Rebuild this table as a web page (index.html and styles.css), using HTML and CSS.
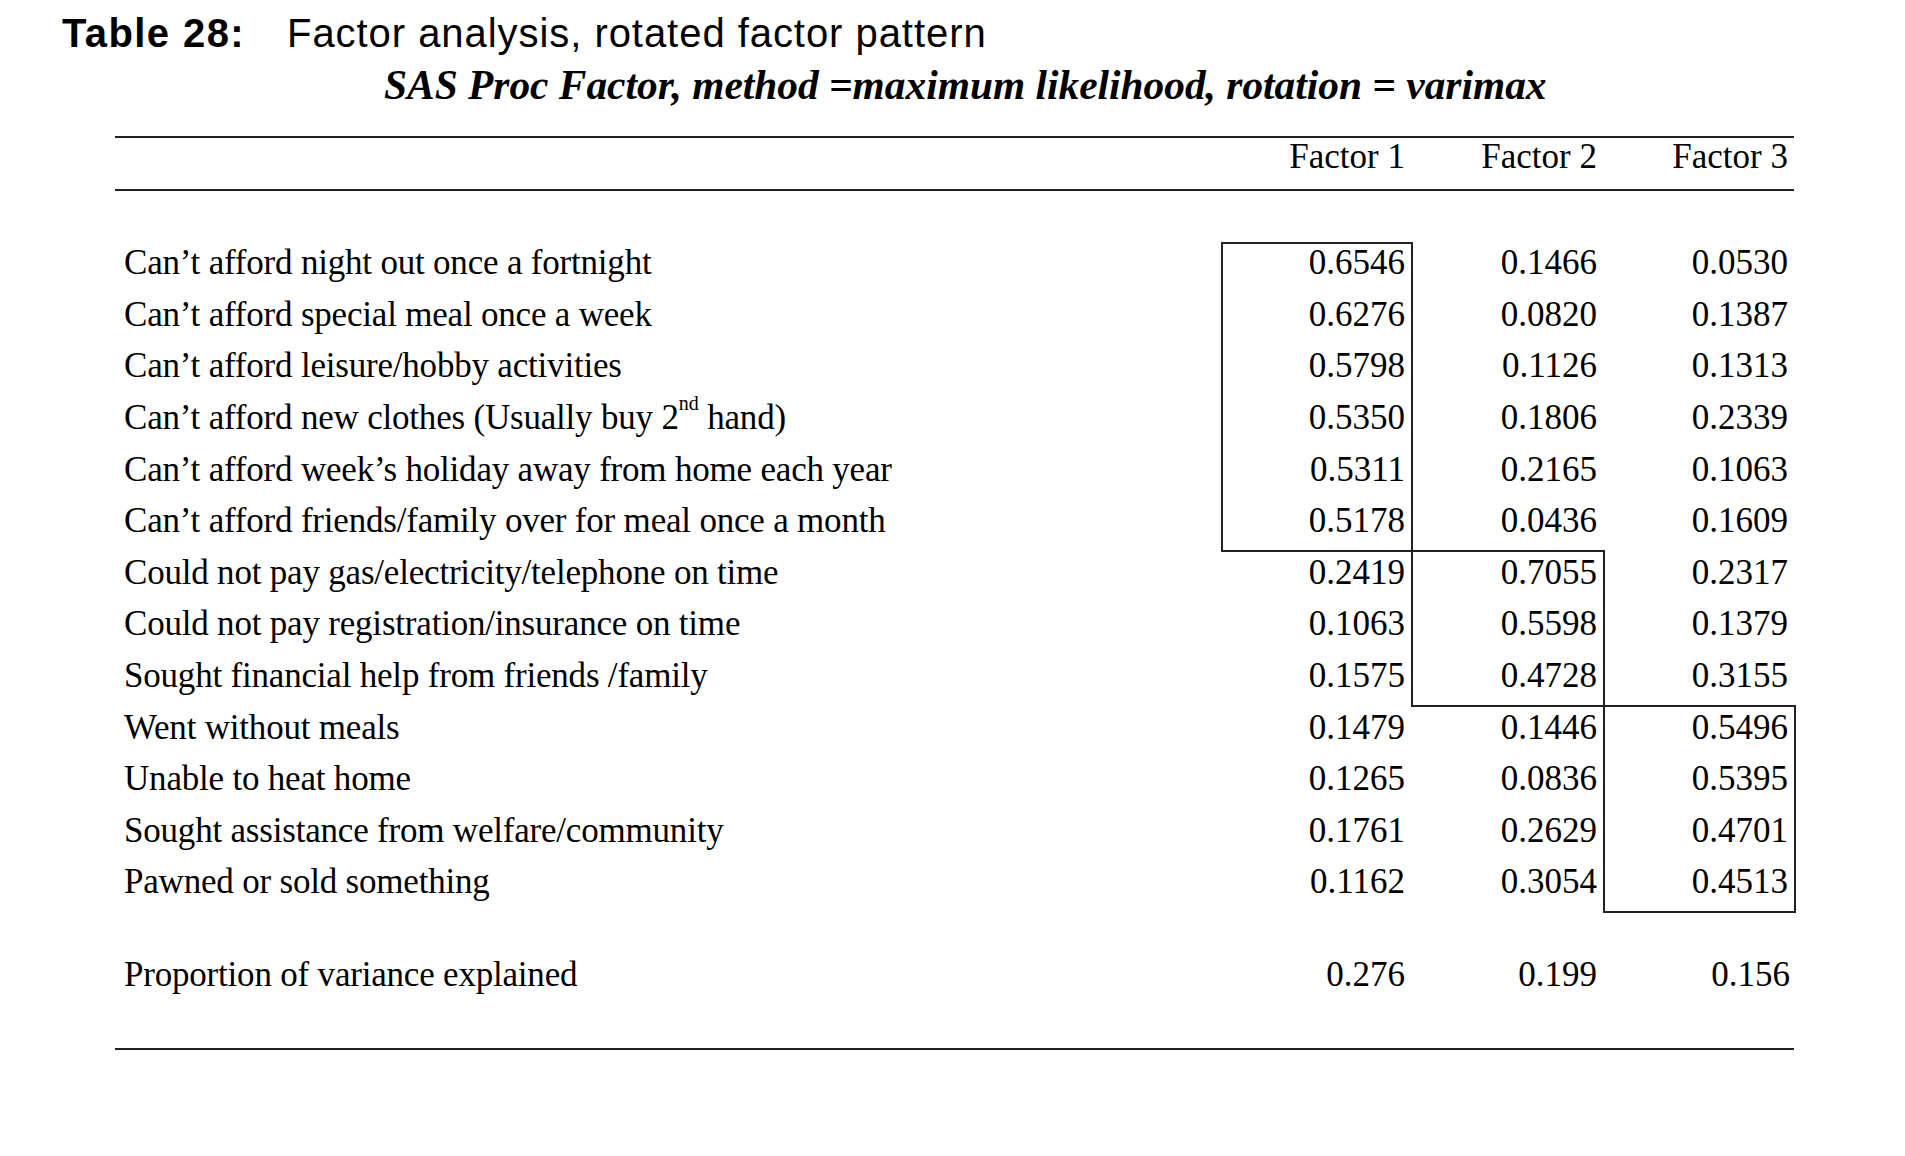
FILE: index.html
```html
<!DOCTYPE html>
<html lang="en">
<head>
<meta charset="utf-8">
<title>Table 28: Factor analysis, rotated factor pattern</title>
<link rel="stylesheet" href="styles.css">
</head>
<body>
<div class="page">
  <div class="title">
    <span class="tnum">Table 28:</span>
    <span class="ttext">Factor analysis, rotated factor pattern</span>
  </div>
  <div class="subtitle">SAS Proc Factor, method =maximum likelihood, rotation = varimax</div>

  <div class="wrap">
    <div class="head">
      <div></div>
      <div class="hcell">Factor 1</div>
      <div class="hcell">Factor 2</div>
      <div class="hcell h3">Factor 3</div>
    </div>

    <table class="data">
      <colgroup>
        <col class="c-label"><col class="c-num"><col class="c-num"><col class="c-num3">
      </colgroup>
      <tbody>
        <tr><td class="label">Can’t afford night out once a fortnight</td><td class="num bl br bt">0.6546</td><td class="num">0.1466</td><td class="num">0.0530</td></tr>
        <tr><td class="label">Can’t afford special meal once a week</td><td class="num bl br">0.6276</td><td class="num">0.0820</td><td class="num">0.1387</td></tr>
        <tr><td class="label">Can’t afford leisure/hobby activities</td><td class="num bl br">0.5798</td><td class="num">0.1126</td><td class="num">0.1313</td></tr>
        <tr><td class="label">Can’t afford new clothes (Usually buy 2<sup class="sup">nd</sup> hand)</td><td class="num bl br">0.5350</td><td class="num">0.1806</td><td class="num">0.2339</td></tr>
        <tr><td class="label">Can’t afford week’s holiday away from home each year</td><td class="num bl br">0.5311</td><td class="num">0.2165</td><td class="num">0.1063</td></tr>
        <tr><td class="label">Can’t afford friends/family over for meal once a month</td><td class="num bl br bb">0.5178</td><td class="num bb">0.0436</td><td class="num">0.1609</td></tr>
        <tr><td class="label">Could not pay gas/electricity/telephone on time</td><td class="num br">0.2419</td><td class="num br">0.7055</td><td class="num">0.2317</td></tr>
        <tr><td class="label">Could not pay registration/insurance on time</td><td class="num br">0.1063</td><td class="num br">0.5598</td><td class="num">0.1379</td></tr>
        <tr><td class="label">Sought financial help from friends /family</td><td class="num br">0.1575</td><td class="num br bb">0.4728</td><td class="num bb">0.3155</td></tr>
        <tr><td class="label">Went without meals</td><td class="num">0.1479</td><td class="num br">0.1446</td><td class="num br">0.5496</td></tr>
        <tr><td class="label">Unable to heat home</td><td class="num">0.1265</td><td class="num br">0.0836</td><td class="num br">0.5395</td></tr>
        <tr><td class="label">Sought assistance from welfare/community</td><td class="num">0.1761</td><td class="num br">0.2629</td><td class="num br">0.4701</td></tr>
        <tr><td class="label">Pawned or sold something</td><td class="num">0.1162</td><td class="num br">0.3054</td><td class="num br bb">0.4513</td></tr>
        <tr class="spacer"><td colspan="4"></td></tr>
        <tr><td class="label">Proportion of variance explained</td><td class="num">0.276</td><td class="num">0.199</td><td class="num p3">0.156</td></tr>
      </tbody>
    </table>

    <div class="rule-bottom"></div>
  </div>
</div>
</body>
</html>
```

FILE: styles.css
```css
html, body {
  margin: 0;
  padding: 0;
  background: #ffffff;
  color: #000000;
}

body {
  font-family: "Liberation Serif", "Times New Roman", serif;
}

.page {
  width: 1905px;
  padding-top: 9px;
}

.title {
  display: flex;
  align-items: baseline;
  gap: 42px;
  margin-left: 62px;
  font-family: "Liberation Sans", Arial, sans-serif;
  font-size: 40px;
  line-height: 48px;
}

.tnum {
  font-weight: bold;
  letter-spacing: 1.4px;
}

.ttext {
  font-weight: normal;
  letter-spacing: 0.95px;
}

.subtitle {
  margin-top: 3.5px;
  margin-left: 384px;
  font-family: "Liberation Serif", "Times New Roman", serif;
  font-weight: bold;
  font-style: italic;
  font-size: 41.4px;
  line-height: 48px;
}

.wrap {
  margin-top: 27.5px;
  margin-left: 115px;
  width: 1681px;
}

.head {
  width: 1679px;
  display: grid;
  grid-template-columns: 1106px 192px 192px 189px;
  border-top: 2px solid #222;
  border-bottom: 2px solid #222;
  height: 51px;
  box-sizing: content-box;
  font-size: 35px;
  line-height: 30px;
}

.hcell {
  padding-top: 4px;
  padding-right: 8px;
  text-align: right;
}

.head .h3 {
  padding-right: 6px;
}

.data {
  margin-top: 51.3px;
  width: 1681px;
  table-layout: fixed;
  border-collapse: separate;
  border-spacing: 0;
  font-size: 35px;
}

.c-label { width: 1106px; }
.c-num { width: 192px; }
.c-num3 { width: 191px; }

.data td {
  padding: 1px 8px 10.6px 0;
  line-height: 40px;
  white-space: nowrap;
  vertical-align: top;
  box-shadow:
    inset var(--l, 0px) 0 0 #222,
    inset calc(var(--r, 0px) * -1) 0 0 #222,
    inset 0 var(--t, 0px) 0 #222,
    inset 0 calc(var(--b, 0px) * -1) 0 #222;
}

.data td.label {
  padding-left: 9px;
  letter-spacing: -0.2px;
  text-align: left;
}

.data td.num {
  text-align: right;
}

.data td.p3 {
  padding-right: 6px;
}

.bl { --l: 2px; }
.br { --r: 2px; }
.bt { --t: 2px; }
.bb { --b: 2px; }

.data tr.spacer td {
  height: 41.4px;
  padding: 0;
  line-height: 0;
}

.sup {
  font-size: 20px;
  line-height: 0;
  vertical-align: 19px;
  letter-spacing: 0;
}

.rule-bottom {
  margin-top: 41.5px;
  width: 1679px;
  border-top: 2px solid #222;
}
```
